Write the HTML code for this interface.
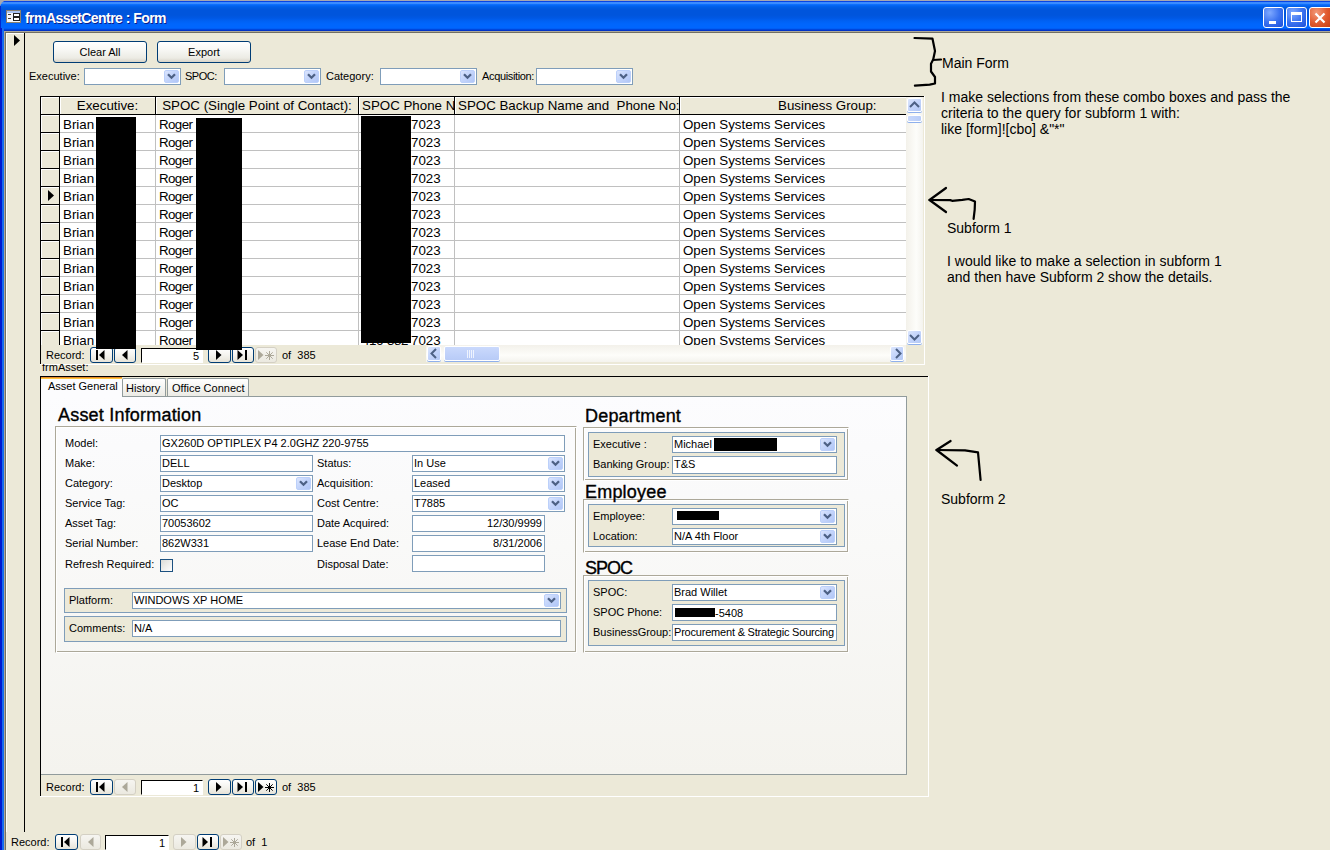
<!DOCTYPE html>
<html><head><meta charset="utf-8">
<style>
*{margin:0;padding:0;box-sizing:border-box}
html,body{width:1330px;height:850px;overflow:hidden;background:#ece9d8;font-family:"Liberation Sans",sans-serif;color:#000}
.a{position:absolute}
.t11{font-size:11px;line-height:13px;white-space:nowrap}
.t13{font-size:13.333px;line-height:16px;white-space:nowrap}
.t13a{font-size:14px;line-height:16px;white-space:nowrap}
.tb{position:absolute;background:#fff;border:1px solid #7f9db9;font-size:11px;line-height:14px;padding-left:1px;white-space:nowrap;overflow:hidden}
.dd{position:absolute;right:1px;top:1px;width:15px;bottom:1px;border-radius:2px;background:linear-gradient(135deg,#dbe5fd 0%,#c4d5fb 45%,#b1c6f6 100%);border:1px solid #bcd0fa}
.dd svg{position:absolute;left:1px;top:1px}
.btn{position:absolute;border:1px solid #003c74;border-radius:3px;background:linear-gradient(#ffffff 0%,#f7f7f4 40%,#ecebe4 80%,#d8d4c8 100%);font-size:11px;text-align:center}
.nb{position:absolute;width:22px;height:16px;border:1px solid #003c74;border-radius:3px;background:linear-gradient(#ffffff 0%,#f5f4ef 50%,#e6e3d8 100%)}
.nb.dis{border-color:#d4d0c4;background:linear-gradient(#f6f5f1,#ebe9e0)}
.nb svg{position:absolute;left:-1px;top:-1px}
.ntb{position:absolute;height:15px;background:#fff;border-top:1px solid #000;border-left:1px solid #000;border-right:1px solid #fff;border-bottom:1px solid #fff;font-size:11px;line-height:15px;text-align:right;padding-right:3px}
.grp{position:absolute;border:1px solid #d0d0bf;box-shadow:inset 1px 1px 0 #fff, 1px 1px 0 #fff}
.grp2{position:absolute;border-top:1px solid #aca899;border-left:1px solid #aca899;border-right:1px solid #fff;border-bottom:1px solid #fff;box-shadow:inset 1px 1px 0 #fff,inset -1px -1px 0 #aca899}
.blu{position:absolute;border:1px solid #7f9db9;background:#ece9d8}
.hd{position:absolute;z-index:2;font-size:18px;line-height:20px;-webkit-text-stroke:0.35px #000;letter-spacing:0.2px;white-space:nowrap}
.red{position:absolute;background:#000}
</style></head><body>

<!-- TITLE BAR -->
<div class="a" style="left:0;top:0;width:1330px;height:31px;border-top-left-radius:8px;background:linear-gradient(#a8a8b0 0px,#a8a8b0 1px,#0844e4 1px,#0844e4 2px,#3b8cff 2px,#3a8bff 4px,#1474ff 4px,#0466f4 5.5px,#005de6 7px,#0055dc 10px,#0055dc 15px,#0058e4 18px,#0061f4 21px,#0066fc 24px,#0066ff 28px,#0058ec 29px,#0036cc 30px,#0030c4 31px)"></div>
<div class="a" style="left:0;top:0;width:10px;height:10px;background:#a8a8b0;"></div>
<div class="a" style="left:0;top:0;width:16px;height:31px;border-top-left-radius:8px;background:linear-gradient(#a8a8b0 0px,#a8a8b0 1px,#0844e4 1px,#0844e4 2px,#3b8cff 2px,#3a8bff 4px,#1474ff 4px,#0466f4 5.5px,#005de6 7px,#0055dc 10px,#0055dc 15px,#0058e4 18px,#0061f4 21px,#0066fc 24px,#0066ff 28px,#0058ec 29px,#0036cc 30px,#0030c4 31px)"></div>
<!-- title icon -->
<svg class="a" style="left:6px;top:10px" width="15" height="13" viewBox="0 0 15 13">
<rect x="0" y="0" width="15" height="13" fill="#8a8270"/>
<rect x="1" y="1" width="13" height="11" fill="#f4f6fb"/>
<rect x="1" y="1" width="13" height="2" fill="#a9c2f0"/>
<rect x="2" y="4" width="3" height="1" fill="#4a4030"/><rect x="2" y="8" width="3" height="1" fill="#4a4030"/>
<rect x="7" y="3" width="7" height="4" fill="#222"/><rect x="8" y="4" width="5" height="2" fill="#fff"/>
<rect x="7" y="7" width="7" height="4" fill="#222"/><rect x="8" y="8" width="5" height="2" fill="#fff"/>
</svg>
<div class="a" style="left:0;top:6px;width:1px;height:25px;background:#0028d0"></div>
<div class="a" style="left:25px;top:10px;font-size:14px;line-height:17px;font-weight:bold;letter-spacing:-0.55px;color:#fff;text-shadow:1px 1px 0 #0a1e8c;white-space:nowrap">frmAssetCentre : Form</div>
<!-- caption buttons -->
<div class="a" style="left:1263px;top:7px;width:21px;height:21px;border:1px solid #fff;border-radius:3px;background:radial-gradient(circle at 30% 25%,#7fa9ff 0%,#3c73f0 50%,#1b4fd9 100%)"><div class="a" style="left:5px;top:13px;width:7px;height:3px;background:#fff"></div></div>
<div class="a" style="left:1286px;top:7px;width:21px;height:21px;border:1px solid #fff;border-radius:3px;background:radial-gradient(circle at 30% 25%,#7fa9ff 0%,#3c73f0 50%,#1b4fd9 100%)"><div class="a" style="left:4px;top:4px;width:11px;height:10px;border:1px solid #fff;border-top-width:3px"></div></div>
<div class="a" style="left:1309px;top:7px;width:24px;height:21px;border:1px solid #fff;border-radius:3px;background:radial-gradient(circle at 30% 25%,#f29b7a 0%,#e15a2f 50%,#c43a10 100%)">
<svg class="a" style="left:4px;top:4px" width="12" height="12"><path d="M1.5 1.5L10.5 10.5M10.5 1.5L1.5 10.5" stroke="#fff" stroke-width="2.2"/></svg></div>

<!-- WINDOW FRAME -->
<div class="a" style="left:0;top:28px;width:2px;height:822px;background:#0019cf"></div>
<div class="a" style="left:2px;top:28px;width:2px;height:822px;background:#166aee"></div>
<div class="a" style="left:4px;top:31px;width:1326px;height:1px;background:#aca899"></div>
<div class="a" style="left:4px;top:31px;width:1px;height:819px;background:#aca899"></div>
<div class="a" style="left:5px;top:32px;width:1325px;height:1px;background:#716f64"></div>
<div class="a" style="left:5px;top:32px;width:1px;height:818px;background:#716f64"></div>
<!-- main record selector -->
<div class="a" style="left:6px;top:33px;width:19px;height:1px;background:#fff"></div>
<div class="a" style="left:6px;top:33px;width:1px;height:799px;background:#fff"></div>
<div class="a" style="left:24px;top:33px;width:1px;height:799px;background:#000"></div>
<svg class="a" style="left:14px;top:35px" width="6" height="11"><path d="M0 0L6 5.5L0 11Z" fill="#000"/></svg>

<!-- MAIN FORM CONTROLS -->
<div class="btn" style="left:53px;top:41px;width:94px;height:22px;line-height:20px">Clear All</div>
<div class="btn" style="left:157px;top:41px;width:94px;height:22px;line-height:20px">Export</div>

<div class="a t11" style="left:29px;top:70px">Executive:</div>
<div class="tb" style="left:84px;top:68px;width:97px;height:17px"><div class="dd"><svg width="11" height="9"><path d="M2 2.2L5.5 5.7L9 2.2" fill="none" stroke="#4d6185" stroke-width="2.3"/></svg></div></div>
<div class="a t11" style="left:185px;top:70px;letter-spacing:-0.5px">SPOC:</div>
<div class="tb" style="left:224px;top:68px;width:97px;height:17px"><div class="dd"><svg width="11" height="9"><path d="M2 2.2L5.5 5.7L9 2.2" fill="none" stroke="#4d6185" stroke-width="2.3"/></svg></div></div>
<div class="a t11" style="left:326px;top:70px">Category:</div>
<div class="tb" style="left:380px;top:68px;width:97px;height:17px"><div class="dd"><svg width="11" height="9"><path d="M2 2.2L5.5 5.7L9 2.2" fill="none" stroke="#4d6185" stroke-width="2.3"/></svg></div></div>
<div class="a t11" style="left:482px;top:70px;letter-spacing:-0.35px">Acquisition:</div>
<div class="tb" style="left:536px;top:68px;width:97px;height:17px"><div class="dd"><svg width="11" height="9"><path d="M2 2.2L5.5 5.7L9 2.2" fill="none" stroke="#4d6185" stroke-width="2.3"/></svg></div></div>


<!-- datasheet -->
<div class="a" style="left:40px;top:96px;width:885px;height:1px;background:#000"></div>
<div class="a" style="left:40px;top:96px;width:1px;height:268px;background:#000"></div>
<div class="a" style="left:924px;top:96px;width:1px;height:269px;background:#fff"></div>
<div class="a" style="left:40px;top:364px;width:885px;height:1px;background:#fff"></div>
<div class="a" style="left:41px;top:97px;width:865px;height:17px;background:#ece9d8"></div>
<div class="a" style="left:41px;top:97px;width:865px;height:1px;background:#fff"></div>
<div class="a" style="left:41px;top:97px;width:1px;height:17px;background:#fff"></div>
<div class="a" style="left:41px;top:114px;width:865px;height:1px;background:#000"></div>
<div class="a" style="left:59px;top:97px;width:1px;height:17px;background:#000"></div>
<div class="a" style="left:60px;top:98px;width:1px;height:16px;background:#fff"></div>
<div class="a" style="left:155px;top:97px;width:1px;height:17px;background:#000"></div>
<div class="a" style="left:156px;top:98px;width:1px;height:16px;background:#fff"></div>
<div class="a" style="left:358px;top:97px;width:1px;height:17px;background:#000"></div>
<div class="a" style="left:359px;top:98px;width:1px;height:16px;background:#fff"></div>
<div class="a" style="left:454px;top:97px;width:1px;height:17px;background:#000"></div>
<div class="a" style="left:455px;top:98px;width:1px;height:16px;background:#fff"></div>
<div class="a" style="left:679px;top:97px;width:1px;height:17px;background:#000"></div>
<div class="a" style="left:680px;top:98px;width:1px;height:16px;background:#fff"></div>
<div class="a" style="left:60px;top:115px;width:846px;height:230px;background:#fff"></div>
<div class="a" style="left:41px;top:115px;width:18px;height:230px;background:#ece9d8"></div>
<div class="a" style="left:59px;top:97px;width:1px;height:248px;background:#000"></div>
<div class="a" style="left:41px;top:115px;width:1px;height:17px;background:#fff"></div>
<div class="a" style="left:41px;top:115px;width:18px;height:1px;background:#fff"></div>
<div class="a" style="left:41px;top:132px;width:18px;height:1px;background:#000"></div>
<div class="a" style="left:60px;top:132px;width:846px;height:1px;background:#c0c0c0"></div>
<div class="a" style="left:41px;top:133px;width:1px;height:17px;background:#fff"></div>
<div class="a" style="left:41px;top:133px;width:18px;height:1px;background:#fff"></div>
<div class="a" style="left:41px;top:150px;width:18px;height:1px;background:#000"></div>
<div class="a" style="left:60px;top:150px;width:846px;height:1px;background:#c0c0c0"></div>
<div class="a" style="left:41px;top:151px;width:1px;height:17px;background:#fff"></div>
<div class="a" style="left:41px;top:151px;width:18px;height:1px;background:#fff"></div>
<div class="a" style="left:41px;top:168px;width:18px;height:1px;background:#000"></div>
<div class="a" style="left:60px;top:168px;width:846px;height:1px;background:#c0c0c0"></div>
<div class="a" style="left:41px;top:169px;width:1px;height:17px;background:#fff"></div>
<div class="a" style="left:41px;top:169px;width:18px;height:1px;background:#fff"></div>
<div class="a" style="left:41px;top:186px;width:18px;height:1px;background:#000"></div>
<div class="a" style="left:60px;top:186px;width:846px;height:1px;background:#c0c0c0"></div>
<div class="a" style="left:41px;top:187px;width:1px;height:17px;background:#fff"></div>
<div class="a" style="left:41px;top:187px;width:18px;height:1px;background:#fff"></div>
<div class="a" style="left:41px;top:204px;width:18px;height:1px;background:#000"></div>
<div class="a" style="left:60px;top:204px;width:846px;height:1px;background:#c0c0c0"></div>
<div class="a" style="left:41px;top:205px;width:1px;height:17px;background:#fff"></div>
<div class="a" style="left:41px;top:205px;width:18px;height:1px;background:#fff"></div>
<div class="a" style="left:41px;top:222px;width:18px;height:1px;background:#000"></div>
<div class="a" style="left:60px;top:222px;width:846px;height:1px;background:#c0c0c0"></div>
<div class="a" style="left:41px;top:223px;width:1px;height:17px;background:#fff"></div>
<div class="a" style="left:41px;top:223px;width:18px;height:1px;background:#fff"></div>
<div class="a" style="left:41px;top:240px;width:18px;height:1px;background:#000"></div>
<div class="a" style="left:60px;top:240px;width:846px;height:1px;background:#c0c0c0"></div>
<div class="a" style="left:41px;top:241px;width:1px;height:17px;background:#fff"></div>
<div class="a" style="left:41px;top:241px;width:18px;height:1px;background:#fff"></div>
<div class="a" style="left:41px;top:258px;width:18px;height:1px;background:#000"></div>
<div class="a" style="left:60px;top:258px;width:846px;height:1px;background:#c0c0c0"></div>
<div class="a" style="left:41px;top:259px;width:1px;height:17px;background:#fff"></div>
<div class="a" style="left:41px;top:259px;width:18px;height:1px;background:#fff"></div>
<div class="a" style="left:41px;top:276px;width:18px;height:1px;background:#000"></div>
<div class="a" style="left:60px;top:276px;width:846px;height:1px;background:#c0c0c0"></div>
<div class="a" style="left:41px;top:277px;width:1px;height:17px;background:#fff"></div>
<div class="a" style="left:41px;top:277px;width:18px;height:1px;background:#fff"></div>
<div class="a" style="left:41px;top:294px;width:18px;height:1px;background:#000"></div>
<div class="a" style="left:60px;top:294px;width:846px;height:1px;background:#c0c0c0"></div>
<div class="a" style="left:41px;top:295px;width:1px;height:17px;background:#fff"></div>
<div class="a" style="left:41px;top:295px;width:18px;height:1px;background:#fff"></div>
<div class="a" style="left:41px;top:312px;width:18px;height:1px;background:#000"></div>
<div class="a" style="left:60px;top:312px;width:846px;height:1px;background:#c0c0c0"></div>
<div class="a" style="left:41px;top:313px;width:1px;height:17px;background:#fff"></div>
<div class="a" style="left:41px;top:313px;width:18px;height:1px;background:#fff"></div>
<div class="a" style="left:41px;top:330px;width:18px;height:1px;background:#000"></div>
<div class="a" style="left:60px;top:330px;width:846px;height:1px;background:#c0c0c0"></div>
<div class="a" style="left:41px;top:331px;width:1px;height:14px;background:#fff"></div>
<div class="a" style="left:41px;top:331px;width:18px;height:1px;background:#fff"></div>
<div class="a" style="left:155px;top:115px;width:1px;height:230px;background:#c0c0c0"></div>
<div class="a" style="left:358px;top:115px;width:1px;height:230px;background:#c0c0c0"></div>
<div class="a" style="left:454px;top:115px;width:1px;height:230px;background:#c0c0c0"></div>
<div class="a" style="left:679px;top:115px;width:1px;height:230px;background:#c0c0c0"></div>
<svg class="a" style="left:48px;top:190px" width="6" height="11"><path d="M0 0L6 5.5L0 11Z" fill="#000"/></svg>
<div class="a" style="left:41px;top:96px;width:865px;height:345px;overflow:hidden">
<div class="a t13" style="left:19px;top:2px;width:95px;text-align:center;">Executive:</div>
<div class="a t13" style="left:115px;top:2px;width:202px;text-align:center;">SPOC (Single Point of Contact):</div>
<div class="a t13" style="left:321px;top:2px;width:92px;overflow:hidden">SPOC Phone No:</div>
<div class="a t13" style="left:417px;top:2px;">SPOC Backup Name and&nbsp; Phone No:</div>
<div class="a t13" style="left:737px;top:2px;">Business Group:</div>
</div>
<div class="a" style="left:60px;top:115px;width:846px;height:230px;overflow:hidden">
<div class="a t13" style="left:3px;top:2px">Brian</div>
<div class="a t13" style="left:99px;top:2px;letter-spacing:-0.6px">Roger</div>
<div class="a t13" style="left:302px;top:2px;letter-spacing:-0.4px">416-382</div>
<div class="a t13" style="left:351px;top:2px">7023</div>
<div class="a t13" style="left:623px;top:2px">Open Systems Services</div>
<div class="a t13" style="left:3px;top:20px">Brian</div>
<div class="a t13" style="left:99px;top:20px;letter-spacing:-0.6px">Roger</div>
<div class="a t13" style="left:302px;top:20px;letter-spacing:-0.4px">416-382</div>
<div class="a t13" style="left:351px;top:20px">7023</div>
<div class="a t13" style="left:623px;top:20px">Open Systems Services</div>
<div class="a t13" style="left:3px;top:38px">Brian</div>
<div class="a t13" style="left:99px;top:38px;letter-spacing:-0.6px">Roger</div>
<div class="a t13" style="left:302px;top:38px;letter-spacing:-0.4px">416-382</div>
<div class="a t13" style="left:351px;top:38px">7023</div>
<div class="a t13" style="left:623px;top:38px">Open Systems Services</div>
<div class="a t13" style="left:3px;top:56px">Brian</div>
<div class="a t13" style="left:99px;top:56px;letter-spacing:-0.6px">Roger</div>
<div class="a t13" style="left:302px;top:56px;letter-spacing:-0.4px">416-382</div>
<div class="a t13" style="left:351px;top:56px">7023</div>
<div class="a t13" style="left:623px;top:56px">Open Systems Services</div>
<div class="a t13" style="left:3px;top:74px">Brian</div>
<div class="a t13" style="left:99px;top:74px;letter-spacing:-0.6px">Roger</div>
<div class="a t13" style="left:302px;top:74px;letter-spacing:-0.4px">416-382</div>
<div class="a t13" style="left:351px;top:74px">7023</div>
<div class="a t13" style="left:623px;top:74px">Open Systems Services</div>
<div class="a t13" style="left:3px;top:92px">Brian</div>
<div class="a t13" style="left:99px;top:92px;letter-spacing:-0.6px">Roger</div>
<div class="a t13" style="left:302px;top:92px;letter-spacing:-0.4px">416-382</div>
<div class="a t13" style="left:351px;top:92px">7023</div>
<div class="a t13" style="left:623px;top:92px">Open Systems Services</div>
<div class="a t13" style="left:3px;top:110px">Brian</div>
<div class="a t13" style="left:99px;top:110px;letter-spacing:-0.6px">Roger</div>
<div class="a t13" style="left:302px;top:110px;letter-spacing:-0.4px">416-382</div>
<div class="a t13" style="left:351px;top:110px">7023</div>
<div class="a t13" style="left:623px;top:110px">Open Systems Services</div>
<div class="a t13" style="left:3px;top:128px">Brian</div>
<div class="a t13" style="left:99px;top:128px;letter-spacing:-0.6px">Roger</div>
<div class="a t13" style="left:302px;top:128px;letter-spacing:-0.4px">416-382</div>
<div class="a t13" style="left:351px;top:128px">7023</div>
<div class="a t13" style="left:623px;top:128px">Open Systems Services</div>
<div class="a t13" style="left:3px;top:146px">Brian</div>
<div class="a t13" style="left:99px;top:146px;letter-spacing:-0.6px">Roger</div>
<div class="a t13" style="left:302px;top:146px;letter-spacing:-0.4px">416-382</div>
<div class="a t13" style="left:351px;top:146px">7023</div>
<div class="a t13" style="left:623px;top:146px">Open Systems Services</div>
<div class="a t13" style="left:3px;top:164px">Brian</div>
<div class="a t13" style="left:99px;top:164px;letter-spacing:-0.6px">Roger</div>
<div class="a t13" style="left:302px;top:164px;letter-spacing:-0.4px">416-382</div>
<div class="a t13" style="left:351px;top:164px">7023</div>
<div class="a t13" style="left:623px;top:164px">Open Systems Services</div>
<div class="a t13" style="left:3px;top:182px">Brian</div>
<div class="a t13" style="left:99px;top:182px;letter-spacing:-0.6px">Roger</div>
<div class="a t13" style="left:302px;top:182px;letter-spacing:-0.4px">416-382</div>
<div class="a t13" style="left:351px;top:182px">7023</div>
<div class="a t13" style="left:623px;top:182px">Open Systems Services</div>
<div class="a t13" style="left:3px;top:200px">Brian</div>
<div class="a t13" style="left:99px;top:200px;letter-spacing:-0.6px">Roger</div>
<div class="a t13" style="left:302px;top:200px;letter-spacing:-0.4px">416-382</div>
<div class="a t13" style="left:351px;top:200px">7023</div>
<div class="a t13" style="left:623px;top:200px">Open Systems Services</div>
<div class="a t13" style="left:3px;top:218px">Brian</div>
<div class="a t13" style="left:99px;top:218px;letter-spacing:-0.6px">Roger</div>
<div class="a t13" style="left:302px;top:218px;letter-spacing:-0.4px">416-382</div>
<div class="a t13" style="left:351px;top:218px">7023</div>
<div class="a t13" style="left:623px;top:218px">Open Systems Services</div>
</div>
<div class="a" style="left:906px;top:97px;width:17px;height:248px;background:linear-gradient(90deg,#f3f1ea,#fdfdfa 60%,#f4f3ee)"></div>
<div class="a" style="left:907px;top:98px;width:15px;height:14px;border-radius:2px;border:1px solid #fff;box-shadow:0 1px 0 #8fb0ec;background:linear-gradient(135deg,#dce6fd,#c3d4fb 50%,#b3c8f5)"><svg class="a" style="left:-1px;top:-1px" width="15" height="15"><path d="M3 9L7.5 4.5L12 9" fill="none" stroke="#4d6185" stroke-width="2"/></svg></div>
<div class="a" style="left:907px;top:115px;width:15px;height:7px;border-radius:2px;border:1px solid #fff;box-shadow:0 1px 0 #8fb0ec;background:linear-gradient(90deg,#c8d8fb,#b9cdf8)"></div>
<div class="a" style="left:907px;top:330px;width:15px;height:14px;border-radius:2px;border:1px solid #fff;box-shadow:0 1px 0 #8fb0ec;background:linear-gradient(135deg,#dce6fd,#c3d4fb 50%,#b3c8f5)"><svg class="a" style="left:-1px;top:-1px" width="15" height="15"><path d="M3 5L7.5 9.5L12 5" fill="none" stroke="#4d6185" stroke-width="2"/></svg></div>
<div class="a" style="left:426px;top:345px;width:480px;height:17px;background:linear-gradient(#f3f1ea,#fdfdfa 60%,#f4f3ee)"></div>
<div class="a" style="left:427px;top:346px;width:14px;height:15px;border-radius:2px;border:1px solid #fff;box-shadow:0 1px 0 #8fb0ec;background:linear-gradient(135deg,#dce6fd,#c3d4fb 50%,#b3c8f5)"><svg class="a" style="left:-1px;top:-1px" width="15" height="15"><path d="M9 3L4.5 7.5L9 12" fill="none" stroke="#4d6185" stroke-width="2"/></svg></div>
<div class="a" style="left:444px;top:346px;width:56px;height:15px;border-radius:2px;border:1px solid #fff;box-shadow:0 1px 0 #8fb0ec;background:linear-gradient(#cad9fc,#b8cbf7)"><svg class="a" style="left:22px;top:3px" width="10" height="8"><g stroke="#eef3fe" stroke-width="1"><path d="M0.5 0V8M2.5 0V8M4.5 0V8M6.5 0V8"/></g></svg></div>
<div class="a" style="left:890px;top:346px;width:14px;height:15px;border-radius:2px;border:1px solid #fff;box-shadow:0 1px 0 #8fb0ec;background:linear-gradient(135deg,#dce6fd,#c3d4fb 50%,#b3c8f5)"><svg class="a" style="left:-1px;top:-1px" width="15" height="15"><path d="M6 3L10.5 7.5L6 12" fill="none" stroke="#4d6185" stroke-width="2"/></svg></div>
<div class="a t11" style="left:46px;top:349px;">Record:</div>
<div class="nb" style="left:90px;top:347px;width:23px"><svg width="22" height="16"><rect x="6" y="3" width="2" height="10" fill="#000"/><path d="M9 8L14.5 3V13Z" fill="#000"/></svg></div>
<div class="nb" style="left:114px;top:347px;width:22px"><svg width="22" height="16"><path d="M8 8L13.5 3V13Z" fill="#000"/></svg></div>
<div class="nb" style="left:208px;top:347px;width:23px"><svg width="22" height="16"><path d="M8 3L13.5 8L8 13Z" fill="#000"/></svg></div>
<div class="nb" style="left:232px;top:347px;width:22px"><svg width="22" height="16"><path d="M5.5 3L11 8L5.5 13Z" fill="#000"/><rect x="13" y="3" width="2" height="10" fill="#000"/></svg></div>
<div class="nb dis" style="left:255px;top:347px;width:22px"><svg width="22" height="16"><path d="M3 3L8.5 8L3 13Z" fill="#aca899"/><g stroke="#aca899" stroke-width="1"><path d="M14.5 4V13M10 8.5H19M11.3 5.3L17.7 11.7M17.7 5.3L11.3 11.7"/></g></svg></div>
<div class="ntb" style="left:141px;top:348px;width:62px">5</div>
<div class="a t11" style="left:282px;top:349px;">of&nbsp; 385</div>
<div class="a" style="left:96px;top:117px;width:40px;height:232px;background:#000"></div>
<div class="a" style="left:196px;top:118px;width:46px;height:232px;background:#000"></div>
<div class="a" style="left:361px;top:116px;width:50px;height:227px;background:#000"></div>
<div class="a" style="left:41px;top:364px;width:200px;height:10px;overflow:hidden"><div class="a t11" style="left:1px;top:-3px">frmAsset:</div></div>
<!-- subform2 -->
<div class="a" style="left:40px;top:376px;width:889px;height:1px;background:#000"></div>
<div class="a" style="left:40px;top:376px;width:1px;height:420px;background:#000"></div>
<div class="a" style="left:928px;top:376px;width:1px;height:421px;background:#fff"></div>
<div class="a" style="left:40px;top:796px;width:889px;height:1px;background:#fff"></div>
<div class="a" style="left:41px;top:396px;width:866px;height:379px;border-right:1px solid #919b9c;border-bottom:1px solid #919b9c;background:linear-gradient(#fcfcfe 0%,#f9f9f8 40%,#f4f3ee 100%)"></div>
<div class="a" style="left:122px;top:396px;width:784px;height:1px;background:#919b9c"></div>
<div class="a" style="left:41px;top:377px;width:81px;height:20px;background:#fcfcfe"></div>
<div class="a" style="left:41px;top:377px;width:81px;height:1px;background:#e68b2c"></div>
<div class="a" style="left:41px;top:378px;width:81px;height:1px;background:#ffc83c"></div>
<div class="a t11" style="left:48px;top:380px;">Asset General</div>
<div class="a" style="left:122px;top:378px;width:44px;height:18px;border:1px solid #919b9c;border-bottom:none;border-radius:2px 2px 0 0;background:linear-gradient(#ffffff,#f3f3ef 60%,#ecebe5)"></div>
<div class="a t11" style="left:126px;top:382px;">History</div>
<div class="a" style="left:167px;top:378px;width:82px;height:18px;border:1px solid #919b9c;border-bottom:none;border-radius:2px 2px 0 0;background:linear-gradient(#ffffff,#f3f3ef 60%,#ecebe5)"></div>
<div class="a t11" style="left:172px;top:382px;">Office Connect</div>
<div class="hd" style="left:58px;top:405px">Asset Information</div>
<div class="grp2" style="left:55px;top:426px;width:522px;height:227px"></div>
<div class="a t11" style="left:65px;top:437px;">Model:</div>
<div class="tb" style="left:160px;top:435px;width:405px;height:17px;">GX260D OPTIPLEX P4 2.0GHZ 220-9755</div>
<div class="a t11" style="left:65px;top:457px;">Make:</div>
<div class="tb" style="left:160px;top:455px;width:153px;height:17px;">DELL</div>
<div class="a t11" style="left:65px;top:477px;">Category:</div>
<div class="tb" style="left:160px;top:475px;width:153px;height:17px;">Desktop<div class="dd"><svg width="11" height="9"><path d="M2 2.2L5.5 5.7L9 2.2" fill="none" stroke="#4d6185" stroke-width="2.3"/></svg></div></div>
<div class="a t11" style="left:65px;top:497px;">Service Tag:</div>
<div class="tb" style="left:160px;top:495px;width:153px;height:17px;">OC</div>
<div class="a t11" style="left:65px;top:517px;">Asset Tag:</div>
<div class="tb" style="left:160px;top:515px;width:153px;height:17px;">70053602</div>
<div class="a t11" style="left:65px;top:537px;">Serial Number:</div>
<div class="tb" style="left:160px;top:535px;width:153px;height:17px;">862W331</div>
<div class="a t11" style="left:65px;top:558px;">Refresh Required:</div>
<div class="a" style="left:160px;top:559px;width:13px;height:13px;border:1px solid #1c5180;background:linear-gradient(135deg,#dcdcd7,#fff)"></div>
<div class="a t11" style="left:317px;top:457px;">Status:</div>
<div class="tb" style="left:412px;top:455px;width:153px;height:17px;">In Use<div class="dd"><svg width="11" height="9"><path d="M2 2.2L5.5 5.7L9 2.2" fill="none" stroke="#4d6185" stroke-width="2.3"/></svg></div></div>
<div class="a t11" style="left:317px;top:477px;">Acquisition:</div>
<div class="tb" style="left:412px;top:475px;width:153px;height:17px;">Leased<div class="dd"><svg width="11" height="9"><path d="M2 2.2L5.5 5.7L9 2.2" fill="none" stroke="#4d6185" stroke-width="2.3"/></svg></div></div>
<div class="a t11" style="left:317px;top:497px;">Cost Centre:</div>
<div class="tb" style="left:412px;top:495px;width:153px;height:17px;">T7885<div class="dd"><svg width="11" height="9"><path d="M2 2.2L5.5 5.7L9 2.2" fill="none" stroke="#4d6185" stroke-width="2.3"/></svg></div></div>
<div class="a t11" style="left:317px;top:517px;">Date Acquired:</div>
<div class="tb" style="left:412px;top:515px;width:133px;height:17px;text-align:right;padding-right:2px">12/30/9999</div>
<div class="a t11" style="left:317px;top:537px;">Lease End Date:</div>
<div class="tb" style="left:412px;top:535px;width:133px;height:17px;text-align:right;padding-right:2px">8/31/2006</div>
<div class="a t11" style="left:317px;top:558px;">Disposal Date:</div>
<div class="tb" style="left:412px;top:555px;width:133px;height:17px;"></div>
<div class="blu" style="left:64px;top:588px;width:503px;height:25px"></div>
<div class="a t11" style="left:69px;top:594px;">Platform:</div>
<div class="tb" style="left:132px;top:592px;width:429px;height:17px;">WINDOWS XP HOME<div class="dd"><svg width="11" height="9"><path d="M2 2.2L5.5 5.7L9 2.2" fill="none" stroke="#4d6185" stroke-width="2.3"/></svg></div></div>
<div class="blu" style="left:64px;top:616px;width:503px;height:26px"></div>
<div class="a t11" style="left:69px;top:622px;">Comments:</div>
<div class="tb" style="left:132px;top:620px;width:429px;height:17px;">N/A</div>
<div class="hd" style="left:585px;top:406px">Department</div>
<div class="grp2" style="left:583px;top:427px;width:266px;height:54px"></div>
<div class="blu" style="left:588px;top:432px;width:257px;height:45px"></div>
<div class="a t11" style="left:593px;top:438px;">Executive :</div>
<div class="tb" style="left:672px;top:436px;width:165px;height:17px;">Michael<div class="dd"><svg width="11" height="9"><path d="M2 2.2L5.5 5.7L9 2.2" fill="none" stroke="#4d6185" stroke-width="2.3"/></svg></div></div>
<div class="a" style="left:714px;top:438px;width:63px;height:13px;background:#000"></div>
<div class="a t11" style="left:593px;top:458px;">Banking Group:</div>
<div class="tb" style="left:672px;top:456px;width:165px;height:18px;">T&amp;S</div>
<div class="hd" style="left:585px;top:482px">Employee</div>
<div class="grp2" style="left:583px;top:499px;width:266px;height:54px"></div>
<div class="blu" style="left:588px;top:504px;width:257px;height:43px"></div>
<div class="a t11" style="left:593px;top:510px;">Employee:</div>
<div class="tb" style="left:672px;top:508px;width:165px;height:17px;"><div class="dd"><svg width="11" height="9"><path d="M2 2.2L5.5 5.7L9 2.2" fill="none" stroke="#4d6185" stroke-width="2.3"/></svg></div></div>
<div class="a" style="left:677px;top:511px;width:42px;height:9px;background:#000"></div>
<div class="a t11" style="left:593px;top:530px;">Location:</div>
<div class="tb" style="left:672px;top:528px;width:165px;height:17px;">N/A 4th Floor<div class="dd"><svg width="11" height="9"><path d="M2 2.2L5.5 5.7L9 2.2" fill="none" stroke="#4d6185" stroke-width="2.3"/></svg></div></div>
<div class="hd" style="left:585px;top:558px;letter-spacing:-1px">SPOC</div>
<div class="grp2" style="left:583px;top:575px;width:266px;height:78px"></div>
<div class="blu" style="left:588px;top:580px;width:257px;height:66px"></div>
<div class="a t11" style="left:593px;top:586px;">SPOC:</div>
<div class="tb" style="left:672px;top:584px;width:165px;height:17px;">Brad Willet<div class="dd"><svg width="11" height="9"><path d="M2 2.2L5.5 5.7L9 2.2" fill="none" stroke="#4d6185" stroke-width="2.3"/></svg></div></div>
<div class="a t11" style="left:593px;top:606px;">SPOC Phone:</div>
<div class="tb" style="left:672px;top:604px;width:165px;height:17px;"><span style="position:absolute;left:42px;top:1px">-5408</span></div>
<div class="a" style="left:675px;top:608px;width:40px;height:9px;background:#000"></div>
<div class="a t11" style="left:593px;top:626px;">BusinessGroup:</div>
<div class="tb" style="left:672px;top:624px;width:165px;height:17px;letter-spacing:-0.2px">Procurement &amp; Strategic Sourcing</div>
<div class="a t11" style="left:46px;top:781px;">Record:</div>
<div class="nb" style="left:90px;top:779px;width:23px"><svg width="22" height="16"><rect x="6" y="3" width="2" height="10" fill="#000"/><path d="M9 8L14.5 3V13Z" fill="#000"/></svg></div>
<div class="nb dis" style="left:114px;top:779px;width:22px"><svg width="22" height="16"><path d="M8 8L13.5 3V13Z" fill="#aca899"/></svg></div>
<div class="nb" style="left:208px;top:779px;width:23px"><svg width="22" height="16"><path d="M8 3L13.5 8L8 13Z" fill="#000"/></svg></div>
<div class="nb" style="left:232px;top:779px;width:22px"><svg width="22" height="16"><path d="M5.5 3L11 8L5.5 13Z" fill="#000"/><rect x="13" y="3" width="2" height="10" fill="#000"/></svg></div>
<div class="nb" style="left:255px;top:779px;width:22px"><svg width="22" height="16"><path d="M3 3L8.5 8L3 13Z" fill="#000"/><g stroke="#000" stroke-width="1"><path d="M14.5 4V13M10 8.5H19M11.3 5.3L17.7 11.7M17.7 5.3L11.3 11.7"/></g></svg></div>
<div class="ntb" style="left:141px;top:780px;width:62px">1</div>
<div class="a t11" style="left:282px;top:781px;">of&nbsp; 385</div>
<svg class="a" style="left:0;top:0" width="1330" height="850" viewBox="0 0 1330 850"><g fill="none" stroke="#000" stroke-width="2.2" stroke-linecap="round" stroke-linejoin="round"><path d="M914.5 38L932.5 38.7L935 51L933.2 59.5L931 63.8L931 71.5L935 77L935 83.5L929.7 84.6L914.9 85.6"/><path d="M933 60L941 59.5"/><path d="M946 188L929.5 200L946 212"/><path d="M929.5 200L950.3 200.1L952.1 200.8L962.3 199.8L968.7 199L975 201.5L974.7 209.6L973.6 218.8"/><path d="M950.6 441L936.5 450L957 465.6"/><path d="M936.5 450L965 450.4L978 452.4L980.6 480"/></g></svg>
<div class="a t13a" style="left:942px;top:55px;">Main Form</div>
<div class="a t13a" style="left:941px;top:89px;">I make selections from these combo boxes and pass the</div>
<div class="a t13a" style="left:941px;top:105px;">criteria to the query for subform 1 with:</div>
<div class="a t13a" style="left:941px;top:121px;">like [form]![cbo] &amp;"*"</div>
<div class="a t13a" style="left:947px;top:220px;">Subform 1</div>
<div class="a t13a" style="left:947px;top:253px;">I would like to make a selection in subform 1</div>
<div class="a t13a" style="left:947px;top:269px;">and then have Subform 2 show the details.</div>
<div class="a t13a" style="left:941px;top:491px;">Subform 2</div>
<div class="a t11" style="left:11px;top:836px;">Record:</div>
<div class="nb" style="left:55px;top:834px;width:23px"><svg width="22" height="16"><rect x="6" y="3" width="2" height="10" fill="#000"/><path d="M9 8L14.5 3V13Z" fill="#000"/></svg></div>
<div class="nb dis" style="left:80px;top:834px;width:21px"><svg width="22" height="16"><path d="M8 8L13.5 3V13Z" fill="#aca899"/></svg></div>
<div class="ntb" style="left:105px;top:835px;width:64px">1</div>
<div class="nb dis" style="left:173px;top:834px;width:23px"><svg width="22" height="16"><path d="M8 3L13.5 8L8 13Z" fill="#aca899"/></svg></div>
<div class="nb" style="left:197px;top:834px;width:22px"><svg width="22" height="16"><path d="M5.5 3L11 8L5.5 13Z" fill="#000"/><rect x="13" y="3" width="2" height="10" fill="#000"/></svg></div>
<div class="nb dis" style="left:220px;top:834px;width:22px"><svg width="22" height="16"><path d="M3 3L8.5 8L3 13Z" fill="#aca899"/><g stroke="#aca899" stroke-width="1"><path d="M14.5 4V13M10 8.5H19M11.3 5.3L17.7 11.7M17.7 5.3L11.3 11.7"/></g></svg></div>
<div class="a t11" style="left:246px;top:836px;">of&nbsp; 1</div>
</body></html>
